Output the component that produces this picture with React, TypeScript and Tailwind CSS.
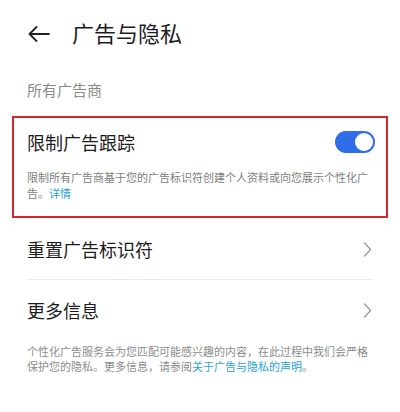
export default function App() {
  const font = { fontFamily: '"Noto Sans CJK SC", "Noto Sans", sans-serif' };
  return (
    <div className="w-[400px] h-[412px] bg-white overflow-hidden" style={font}>
      {/* header */}
      <div className="h-[64px] flex items-center pl-[28px]">
        <svg viewBox="0 0 22 16" className="w-[22px] h-[16px] mt-[3px]" fill="none" stroke="#222" strokeWidth="1.8" strokeLinecap="round" strokeLinejoin="round">
          <path d="M21 8H1.5M8.5 1L1.5 8l7 7" />
        </svg>
        <h1 className="ml-[22px] text-[22px] leading-none text-[#1c1c1c]">广告与隐私</h1>
      </div>

      <div className="pl-[27px] pt-[16px] h-[52px] text-[15px] leading-[20px] text-[#8a8a8a]">所有广告商</div>

      {/* highlighted card */}
      <div className="mx-[12px] border-2 border-[#d6252c] pl-[13px] pr-[11px] pt-[10px] pb-[15px]">
        <div className="flex items-center justify-between h-[28px]">
          <span className="text-[18px] leading-none text-[#1c1c1c]">限制广告跟踪</span>
          <div className="w-[40px] h-[22px] rounded-full bg-[#2f6ee8] flex items-center justify-end pr-[2px]">
            <div className="w-[18px] h-[18px] rounded-full bg-white" />
          </div>
        </div>
        <p className="mt-[13px] text-[11px] leading-[16px] text-[#7e7e7e]">
          限制所有广告商基于您的广告标识符创建个人资料或向您展示个性化广告。<span className="text-[#2ba3d6]">详情</span>
        </p>
      </div>

      {/* rows */}
      <div className="px-[27px] mt-[1px]">
        <div className="h-[60px] flex items-center justify-between">
          <span className="text-[18px] leading-none text-[#1c1c1c]">重置广告标识符</span>
          <Chevron />
        </div>
        <div className="h-px bg-[#ececec]" />
        <div className="h-[60px] flex items-center justify-between">
          <span className="text-[18px] leading-none text-[#1c1c1c]">更多信息</span>
          <Chevron />
        </div>
        <p className="mt-[4px] text-[11px] leading-[15px] text-[#8c8c8c]">
          个性化广告服务会为您匹配可能感兴趣的内容，在此过程中我们会严格保护您的隐私。更多信息，请参阅<span className="text-[#2ba3d6]">关于广告与隐私的声明</span>。
        </p>
      </div>
    </div>
  );
}

function Chevron() {
  return (
    <svg viewBox="0 0 9 15" className="w-[9px] h-[15px] mr-[1px]" fill="none" stroke="#9c9c9c" strokeWidth="1.4" strokeLinecap="round" strokeLinejoin="round">
      <path d="M1.5 1l6 6.5-6 6.5" />
    </svg>
  );
}
